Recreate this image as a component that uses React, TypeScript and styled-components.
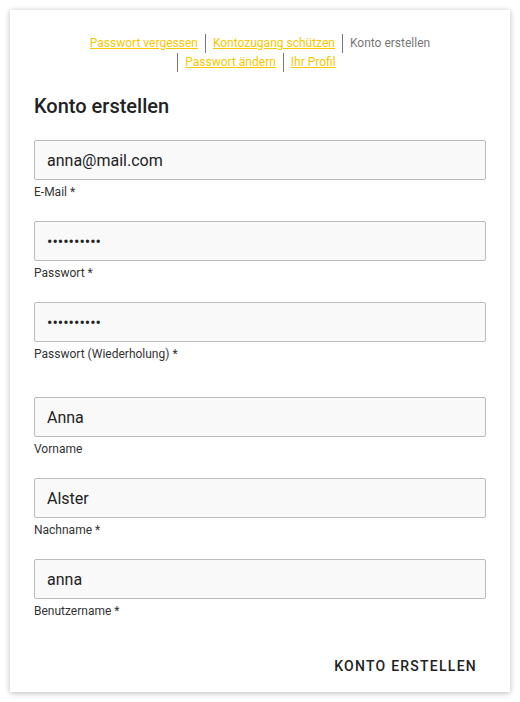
import React from "react";
import styled, { createGlobalStyle } from "styled-components";

const GlobalStyle = createGlobalStyle`
  body {
    margin: 0;
    padding: 10px;
    background: #ffffff;
    font-family: Roboto, "Noto Sans", sans-serif;
  }
`;

const StyledCard = styled.div`
  width: 500px;
  min-height: 682px;
  box-sizing: border-box;
  padding: 24px 24px 8px;
  background: #ffffff;
  box-shadow: 0 1px 6px rgba(0, 0, 0, 0.28);
  display: flex;
  flex-direction: column;
`;

const StyledNav = styled.nav`
  display: flex;
  flex-wrap: wrap;
  justify-content: center;
  padding: 0 40px;
  font-size: 12px;
  line-height: 19px;
`;

const StyledNavItem = styled.a<{ $first?: boolean; $current?: boolean }>`
  padding: 0 7px;
  border-left: ${(p) => (p.$first ? "none" : "1px solid #777")};
  color: ${(p) => (p.$current ? "#777" : "#f7c600")};
  text-decoration: ${(p) => (p.$current ? "none" : "underline")};
  cursor: pointer;
`;

const StyledTitle = styled.h1`
  margin: 22px 0 22px;
  font-size: 20px;
  line-height: 24px;
  font-weight: 500;
  color: #222;
`;

const StyledField = styled.div<{ $spaced?: boolean }>`
  display: flex;
  flex-direction: column;
  margin-bottom: 22px;
  margin-top: ${(p) => (p.$spaced ? "14px" : "0")};
`;

const StyledInput = styled.input`
  height: 40px;
  box-sizing: border-box;
  border: 1px solid #bbb;
  border-radius: 2px;
  background: #f9f9f9;
  padding: 0 12px;
  font-family: Roboto, "Noto Sans", sans-serif;
  font-size: 16px;
  color: #222;
  outline: none;
`;

const StyledLabel = styled.label`
  margin-top: 5px;
  font-size: 12px;
  line-height: 14px;
  color: #333;
`;

const StyledFooter = styled.div`
  display: flex;
  justify-content: flex-end;
  margin-top: auto;
`;

const StyledButton = styled.button`
  border: none;
  background: none;
  padding: 10px 9px;
  font-family: Roboto, "Noto Sans", sans-serif;
  font-size: 14px;
  line-height: 16px;
  font-weight: 500;
  letter-spacing: 1.25px;
  color: #222;
  text-transform: uppercase;
  cursor: pointer;
`;

const links = [
  { label: "Passwort vergessen" },
  { label: "Kontozugang schützen" },
  { label: "Konto erstellen", current: true },
  { label: "Passwort ändern" },
  { label: "Ihr Profil" },
];

const fields = [
  { label: "E-Mail *", value: "anna@mail.com", type: "email" },
  { label: "Passwort *", value: "••••••••••", type: "password" },
  { label: "Passwort (Wiederholung) *", value: "••••••••••", type: "password" },
  { label: "Vorname", value: "Anna", type: "text", spaced: true },
  { label: "Nachname *", value: "Alster", type: "text" },
  { label: "Benutzername *", value: "anna", type: "text" },
];

const App = () => {
  return (
    <>
      <GlobalStyle />
      <StyledCard>
        <StyledNav>
          {links.map((link, i) => (
            <StyledNavItem key={link.label} $first={i === 0} $current={link.current}>
              {link.label}
            </StyledNavItem>
          ))}
        </StyledNav>
        <StyledTitle>Konto erstellen</StyledTitle>
        {fields.map((field) => (
          <StyledField key={field.label} $spaced={field.spaced}>
            <StyledInput type={field.type} defaultValue={field.value} readOnly />
            <StyledLabel>{field.label}</StyledLabel>
          </StyledField>
        ))}
        <StyledFooter>
          <StyledButton>Konto erstellen</StyledButton>
        </StyledFooter>
      </StyledCard>
    </>
  );
};

export default App;
